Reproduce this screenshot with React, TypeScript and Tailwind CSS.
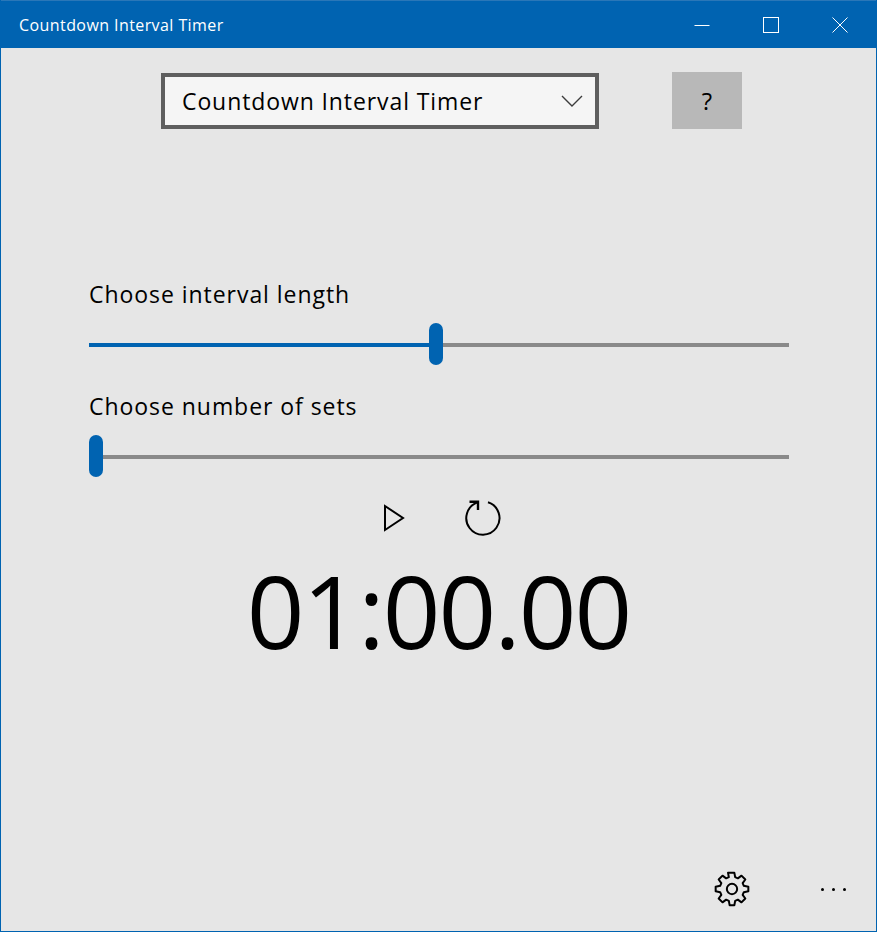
import React from "react";

const font = "font-['Open_Sans','Noto_Sans',sans-serif]";

const Slider = ({ label, percent }: { label: string; percent: number }) => (
  <div className="flex flex-col">
    <span className="h-[32px] text-[23px] leading-[32px] tracking-[0.95px] text-black">{label}</span>
    <div className="mt-[13px] flex h-[42px] w-[700px] items-start">
      <div className="mt-[20px] h-[4px] bg-[#0063b1]" style={{ width: `${percent}%` }} />
      <div className="h-[42px] w-[14px] shrink-0 rounded-[7px] bg-[#0063b1]" />
      <div className="mt-[20px] h-[4px] flex-1 bg-[#8a8a8a]" />
    </div>
  </div>
);

export default function App() {
  return (
    <div className={`${font} flex h-[932px] w-[877px] flex-col overflow-hidden border border-t-0 border-[#0063b1] bg-[#e6e6e6]`}>
      {/* Title bar */}
      <header className="flex h-[48px] shrink-0 items-center justify-between border-t border-[#2a77b8] bg-[#0063b1] pl-[18px] text-white">
        <span className="text-[16px] tracking-[0.42px]">Countdown Interval Timer</span>
        <div className="flex items-center">
          <svg width="16" height="16" viewBox="0 0 16 16" className="mr-[53px]" fill="none" stroke="white" strokeWidth="1">
            <path d="M0.5 8.5H15.5" />
          </svg>
          <svg width="16" height="16" viewBox="0 0 16 16" className="mr-[53px]" fill="none" stroke="white" strokeWidth="1">
            <rect x="0.5" y="0.5" width="15" height="15" />
          </svg>
          <svg width="16" height="16" viewBox="0 0 16 16" className="mr-[28px]" fill="none" stroke="white" strokeWidth="1">
            <path d="M0.5 0.5L15.5 15.5M15.5 0.5L0.5 15.5" />
          </svg>
        </div>
      </header>

      <main className="flex flex-1 flex-col">
        {/* Top row */}
        <div className="mt-[24px] flex items-start pl-[160px]">
          <div className="mt-[1px] flex h-[56px] w-[438px] items-center justify-between border-4 border-[#5f5f5f] bg-[#f5f5f5] pl-[17px] pr-[12px]">
            <span className="text-[23px] tracking-[0.9px] text-black">Countdown Interval Timer</span>
            <svg width="22" height="12" viewBox="0 0 22 12" fill="none" stroke="#3c3c3c" strokeWidth="1.4">
              <path d="M1 1L11 11L21 1" />
            </svg>
          </div>
          <button className="ml-[73px] flex h-[57px] w-[70px] items-center justify-center bg-[#b8b8b8] text-[24px] text-black">?</button>
        </div>

        {/* Sliders */}
        <div className="mt-[149px] flex flex-col gap-[25px] pl-[88px]">
          <Slider label="Choose interval length" percent={48.6} />
          <Slider label="Choose number of sets" percent={0} />
        </div>

        {/* Controls */}
        <div className="mt-[23px] flex items-center justify-center gap-[60px] pl-[6px]">
          <svg width="22" height="30" viewBox="0 0 22 30" fill="none" stroke="#000" strokeWidth="2">
            <path d="M2 3L20 15L2 27Z" />
          </svg>
          <svg width="36" height="36" viewBox="0 0 36 36" fill="none" stroke="#000" strokeWidth="2">
            <path d="M23 2.3A16.6 16.6 0 1 1 12.5 2.4" />
            <path d="M4.5 1.8H13V10" strokeWidth="2.4" />
          </svg>
        </div>

        {/* Timer */}
        <div className="mt-[18px] text-center text-[101px] leading-[112px] tracking-[-2px] text-black">01:00.00</div>

        {/* Bottom bar */}
        <div className="mt-auto mb-[22px] flex items-center justify-end pr-[30px]">
          <svg width="40" height="40" viewBox="0 0 24 24" fill="none" stroke="#000" strokeWidth="1.2" strokeLinejoin="round" className="mr-[69px]">
            <path d="M9.6 2.2L10.1 4.9L8.5 5.6L6.3 4L4 6.3L5.6 8.5L4.9 10.1L2.2 10.6V13.4L4.9 13.9L5.6 15.5L4 17.7L6.3 20L8.5 18.4L10.1 19.1L10.6 21.8H13.4L13.9 19.1L15.5 18.4L17.7 20L20 17.7L18.4 15.5L19.1 13.9L21.8 13.4V10.6L19.1 10.1L18.4 8.5L20 6.3L17.7 4L15.5 5.6L13.9 4.9L13.4 2.2Z" />
            <circle cx="12" cy="12" r="3.1" />
          </svg>
          <div className="flex gap-[8px]">
            <span className="h-[3px] w-[3px] rounded-full bg-black" />
            <span className="h-[3px] w-[3px] rounded-full bg-black" />
            <span className="h-[3px] w-[3px] rounded-full bg-black" />
          </div>
        </div>
      </main>
    </div>
  );
}
